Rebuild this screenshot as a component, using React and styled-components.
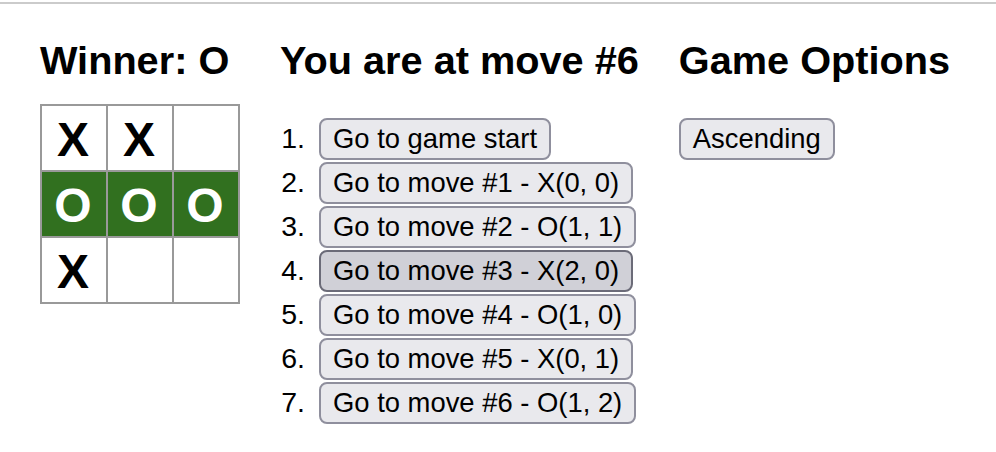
import styled, { createGlobalStyle } from 'styled-components';

const GlobalStyle = createGlobalStyle`
  * { box-sizing: border-box; }
  body {
    margin: 0;
    background: #fff;
    color: #000;
    font-family: "Liberation Sans", Arial, sans-serif;
  }
`;

const squares = ['X', 'X', null, 'O', 'O', 'O', 'X', null, null];
const winLine = [3, 4, 5];

const moves = [
  'Go to game start',
  'Go to move #1 - X(0, 0)',
  'Go to move #2 - O(1, 1)',
  'Go to move #3 - X(2, 0)',
  'Go to move #4 - O(1, 0)',
  'Go to move #5 - X(0, 1)',
  'Go to move #6 - O(1, 2)',
];

const TopRule = styled.div`
  margin-top: 2px;
  height: 2px;
  background: #cbcbcb;
`;

const Game = styled.div`
  display: flex;
  align-items: flex-start;
  gap: 40px;
  padding: 34px 40px 0;
`;

const Column = styled.div`
  display: flex;
  flex-direction: column;
  align-items: flex-start;
`;

const Heading = styled.div`
  font-size: 39.7px;
  line-height: 45px;
  font-weight: bold;
  white-space: nowrap;
`;

const Board = styled.div`
  margin-top: 21px;
  display: grid;
  grid-template-columns: repeat(3, 66px);
  grid-template-rows: repeat(3, 66px);
  padding: 0 2px 2px 0;
`;

const Square = styled.div`
  width: 68px;
  height: 68px;
  border: 2px solid #999;
  background: ${(p) => (p.$win ? '#31701f' : '#fff')};
  color: ${(p) => (p.$win ? '#fff' : '#000')};
  font-size: 48px;
  font-weight: bold;
  line-height: 68px;
  text-align: center;
  padding-right: 2px;
  overflow: visible;
`;

const MoveList = styled.ol`
  list-style: none;
  margin: 35px 0 0;
  padding: 0;
  display: flex;
  flex-direction: column;
  gap: 2px;
`;

const MoveRow = styled.li`
  display: flex;
  align-items: baseline;
  gap: 14px;
`;

const MoveNum = styled.span`
  width: 25px;
  text-align: right;
  font-size: 28.5px;
`;

const Button = styled.button`
  font-family: "Liberation Sans", Arial, sans-serif;
  font-size: 27.4px;
  line-height: 30px;
  padding: 4px 12px;
  border: 2px solid ${(p) => (p.$active ? '#6b6b78' : '#8f8f9d')};
  border-radius: 8px;
  background: ${(p) => (p.$active ? '#d0d0d7' : '#e9e9ed')};
  color: #000;
  white-space: nowrap;
  cursor: pointer;
`;

const OptionButton = styled(Button)`
  margin-top: 35px;
`;

export default function App() {
  return (
    <>
      <GlobalStyle />
      <TopRule />
      <Game>
        <Column>
          <Heading>Winner: O</Heading>
          <Board>
            {squares.map((v, i) => (
              <Square key={i} $win={winLine.includes(i)}>
                {v}
              </Square>
            ))}
          </Board>
        </Column>
        <Column>
          <Heading>You are at move #6</Heading>
          <MoveList>
            {moves.map((label, i) => (
              <MoveRow key={i}>
                <MoveNum>{i + 1}.</MoveNum>
                <Button $active={i === 3}>{label}</Button>
              </MoveRow>
            ))}
          </MoveList>
        </Column>
        <Column>
          <Heading>Game Options</Heading>
          <OptionButton>Ascending</OptionButton>
        </Column>
      </Game>
    </>
  );
}
